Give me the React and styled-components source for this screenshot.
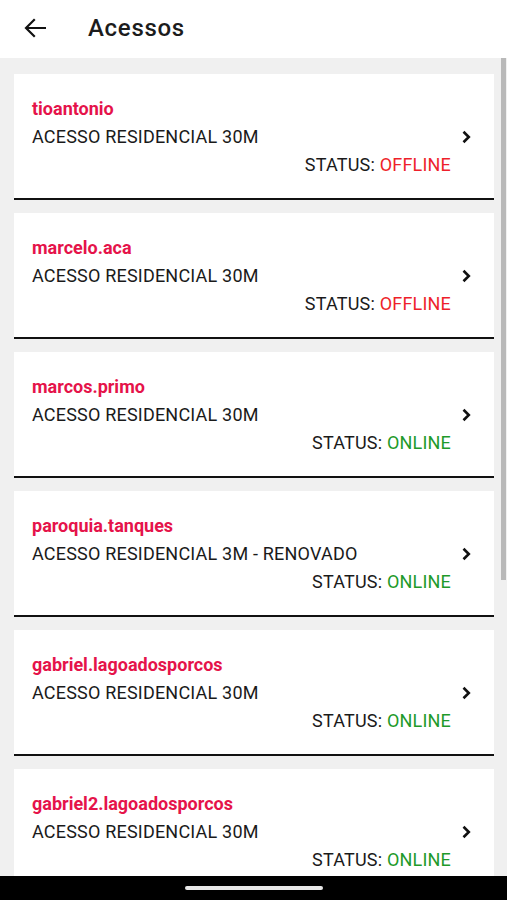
import styled, { createGlobalStyle } from "styled-components";

const GlobalStyle = createGlobalStyle`
  html, body {
    margin: 0;
    padding: 0;
    background: #f0f0f0;
    font-family: Roboto, "Liberation Sans", Arial, sans-serif;
  }
  * {
    box-sizing: border-box;
  }
`;

const acessos = [
  { user: "tioantonio", plan: "ACESSO RESIDENCIAL 30M", online: false },
  { user: "marcelo.aca", plan: "ACESSO RESIDENCIAL 30M", online: false },
  { user: "marcos.primo", plan: "ACESSO RESIDENCIAL 30M", online: true },
  { user: "paroquia.tanques", plan: "ACESSO RESIDENCIAL 3M - RENOVADO", online: true },
  { user: "gabriel.lagoadosporcos", plan: "ACESSO RESIDENCIAL 30M", online: true },
  { user: "gabriel2.lagoadosporcos", plan: "ACESSO RESIDENCIAL 30M", online: true },
];

const Screen = styled.div`
  position: relative;
  width: 507px;
  height: 900px;
  overflow: hidden;
  display: flex;
  flex-direction: column;
  background: #f0f0f0;
`;

const Header = styled.header`
  height: 58px;
  flex-shrink: 0;
  background: #fff;
  display: flex;
  align-items: center;
  padding-left: 23px;
  gap: 41px;
`;

const BackButton = styled.button`
  border: 0;
  background: none;
  padding: 0;
  width: 24px;
  height: 24px;
  display: flex;
  align-items: center;
  justify-content: center;
  color: #111;
  margin-top: -3px;
`;

const Title = styled.h1`
  margin: 0;
  font-size: 24px;
  font-weight: 500;
  letter-spacing: 0.7px;
  color: #1c1c1c;
  margin-top: -3px;
`;

const List = styled.main`
  flex: 1;
  padding: 16px 13px 0 14px;
  display: flex;
  flex-direction: column;
  gap: 13px;
`;

const Card = styled.div`
  background: #fff;
  border-bottom: 2px solid #111;
  display: flex;
  align-items: center;
  padding: 24px 15px 23px 18px;
  flex-shrink: 0;
`;

const Info = styled.div`
  flex: 1;
  display: flex;
  flex-direction: column;
  gap: 7px;
`;

const Line = styled.div`
  font-size: 18px;
  line-height: 21px;
  letter-spacing: 0.2px;
  color: #1a1a1a;
`;

const User = styled(Line)`
  font-weight: 700;
  letter-spacing: 0;
  color: #e5134a;
`;

const Status = styled(Line)`
  text-align: right;
`;

const StatusValue = styled.span`
  color: ${({ $online }) => ($online ? "#1f9a2a" : "#ee1f2b")};
`;

const Chevron = styled.svg`
  width: 24px;
  height: 24px;
  margin-left: 4px;
  flex-shrink: 0;
`;

const ScrollThumb = styled.div`
  position: absolute;
  right: 1px;
  top: 58px;
  width: 5px;
  height: 522px;
  background: #b9b9b9;
`;

const NavBar = styled.div`
  position: absolute;
  left: 0;
  right: 0;
  bottom: 0;
  height: 24px;
  background: #000;
  display: flex;
  align-items: center;
  justify-content: center;
`;

const NavPill = styled.div`
  width: 138px;
  height: 4px;
  border-radius: 2px;
  background: #e8e8e8;
`;

export default function App() {
  return (
    <>
      <GlobalStyle />
      <Screen>
        <Header>
          <BackButton aria-label="Voltar">
            <svg width="22" height="20" viewBox="0 0 22 20" fill="none">
              <path
                d="M21 10H2.5M10 2L2 10l8 8"
                stroke="currentColor"
                strokeWidth="2.2"
                strokeLinecap="square"
              />
            </svg>
          </BackButton>
          <Title>Acessos</Title>
        </Header>
        <List>
          {acessos.map((a) => (
            <Card key={a.user}>
              <Info>
                <User>{a.user}</User>
                <Line>{a.plan}</Line>
                <Status>
                  STATUS:{" "}
                  <StatusValue $online={a.online}>
                    {a.online ? "ONLINE" : "OFFLINE"}
                  </StatusValue>
                </Status>
              </Info>
              <Chevron viewBox="0 0 24 24" fill="none">
                <path
                  d="M8.5 6.8 13.8 12l-5.3 5.2"
                  stroke="#111"
                  strokeWidth="2.6"
                />
              </Chevron>
            </Card>
          ))}
        </List>
        <ScrollThumb />
        <NavBar>
          <NavPill />
        </NavBar>
      </Screen>
    </>
  );
}
